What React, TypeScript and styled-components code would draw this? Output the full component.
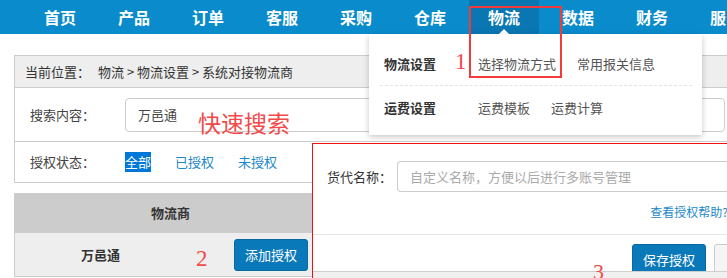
import styled, { createGlobalStyle } from 'styled-components';

const GlobalStyle = createGlobalStyle`
  html, body {
    margin: 0;
    padding: 0;
    overflow: hidden;
    background: #ffffff;
  }
  body {
    font-family: "Noto Sans CJK SC", "Microsoft YaHei", sans-serif;
    font-size: 13px;
    line-height: 20px;
    color: #333333;
  }
`;

const Page = styled.div`
  position: relative;
  width: 727px;
  height: 278px;
  overflow: hidden;
`;

const NavBar = styled.nav`
  display: flex;
  gap: 4px;
  height: 34px;
  padding-left: 25px;
  background: #0a8bcb;
  white-space: nowrap;
`;

const NavItem = styled.div<{ $active?: boolean }>`
  position: relative;
  flex: 0 0 70px;
  display: flex;
  align-items: center;
  justify-content: center;
  font-size: 16px;
  font-weight: 700;
  color: #ffffff;
  background: ${(p) => (p.$active ? '#0a77b3' : 'transparent')};

  &::after {
    content: '';
    display: ${(p) => (p.$active ? 'block' : 'none')};
    position: absolute;
    left: 50%;
    bottom: 0;
    margin-left: -5px;
    border: 5px solid transparent;
    border-bottom-color: #ffffff;
    border-top-width: 0;
  }
`;

const Main = styled.main`
  width: 900px;
  padding: 21px 0 0 14px;
`;

const Panel = styled.section`
  border: 1px solid #cccccc;
`;

const Crumb = styled.div`
  display: flex;
  align-items: center;
  gap: 8px;
  height: 31px;
  padding-left: 10px;
  background: #eeeeee;
  border-bottom: 1px solid #cccccc;
`;

const FilterRow = styled.div<{ $h: number; $line?: boolean }>`
  display: flex;
  align-items: center;
  height: ${(p) => p.$h}px;
  padding-left: 15px;
  border-bottom: ${(p) => (p.$line ? '1px solid #cccccc' : 'none')};
`;

const FilterLabel = styled.span`
  width: 95px;
  flex: 0 0 95px;
  color: #444444;
`;

const SearchInput = styled.div`
  box-sizing: border-box;
  width: 600px;
  height: 34px;
  padding-left: 12px;
  display: flex;
  align-items: center;
  border: 1px solid #cccccc;
  border-radius: 4px;
  color: #444444;
`;

const StatusLinks = styled.div`
  display: flex;
  gap: 24px;
`;

const StatusLink = styled.span<{ $selected?: boolean }>`
  color: ${(p) => (p.$selected ? '#ffffff' : '#1e88c8')};
  background: ${(p) => (p.$selected ? '#0078d7' : 'transparent')};
`;

const Table = styled.div`
  margin-top: 10px;
  border-left: 1px solid #cccccc;
  border-bottom: 1px solid #cccccc;
`;

const HeadRow = styled.div`
  display: flex;
  align-items: center;
  height: 40px;
  background: #cccccc;
`;

const HeadCell = styled.div`
  width: 311px;
  text-align: center;
  font-weight: 700;
  color: #333333;
`;

const BodyRow = styled.div`
  display: flex;
  align-items: center;
  height: 43px;
  background: #eeeeee;
`;

const NameCell = styled.div`
  width: 171px;
  text-align: center;
  font-weight: 700;
  color: #333333;
`;

const PrimaryButton = styled.button`
  box-sizing: border-box;
  height: 32px;
  padding: 0 10px;
  border: 1px solid #06699f;
  border-radius: 3px;
  background: #0a79b9;
  color: #ffffff;
  font: inherit;
  font-size: 13px;
`;

const GhostButton = styled.button`
  box-sizing: border-box;
  height: 32px;
  padding: 0 16px;
  border: 1px solid #cccccc;
  border-radius: 3px;
  background: #f5f5f5;
  color: #333333;
  font: inherit;
  font-size: 13px;
`;

const ActionCell = styled.div`
  padding-left: 48px;
`;

/* 下拉菜单 */
const Dropdown = styled.div`
  position: absolute;
  left: 369px;
  top: 34px;
  box-sizing: border-box;
  width: 333px;
  height: 101px;
  padding: 8px 10px 7px 11px;
  background: #ffffff;
  box-shadow: 0 2px 6px rgba(0, 0, 0, 0.22);
`;

const MenuRow = styled.div<{ $dashed?: boolean }>`
  display: flex;
  align-items: center;
  height: 43px;
  padding-left: 4px;
  border-bottom: ${(p) => (p.$dashed ? '1px dashed #e3e3e3' : 'none')};
`;

const MenuLabel = styled.span`
  width: 94px;
  flex: 0 0 94px;
  font-weight: 700;
  color: #333333;
`;

const MenuLinks = styled.div`
  display: flex;
  gap: 21px;
  color: #555555;
`;

/* 授权弹窗 */
const Modal = styled.div`
  position: absolute;
  left: 312px;
  top: 143px;
  box-sizing: border-box;
  width: 478px;
  height: 140px;
  display: flex;
  flex-direction: column;
  border: 1px solid #ee1111;
  border-bottom: none;
  background: #ffffff;
`;

const ModalForm = styled.div`
  display: flex;
  align-items: center;
  padding: 17px 0 0 14px;
`;

const ModalLabel = styled.span`
  width: 70px;
  flex: 0 0 70px;
  color: #333333;
`;

const ModalInput = styled.div`
  box-sizing: border-box;
  flex: 1;
  height: 31px;
  padding-left: 12px;
  display: flex;
  align-items: center;
  border: 1px solid #cccccc;
  border-right: none;
  border-radius: 4px 0 0 4px;
  color: #aaaaaa;
`;

const HelpRow = styled.div`
  display: flex;
  justify-content: flex-end;
  height: 43px;
  padding: 10px 61px 0 0;
  box-sizing: border-box;
  border-bottom: 1px solid #e5e5e5;
`;

const HelpLink = styled.span`
  font-size: 12px;
  color: #1e88c8;
  white-space: nowrap;
`;

const ModalFooter = styled.div`
  display: flex;
  justify-content: flex-end;
  gap: 8px;
  height: 36px;
  padding: 9px 15px 0 0;
  box-sizing: border-box;
  overflow: hidden;
`;

const ScrollStrip = styled.div`
  height: 10px;
  border-top: 1px solid #cfcfcf;
  background: #f0f0f0;
`;

/* 标注 */
const Mark = styled.span<{ $x: number; $y: number; $size: number; $serif?: boolean }>`
  position: absolute;
  left: ${(p) => p.$x}px;
  top: ${(p) => p.$y}px;
  font-family: ${(p) =>
    p.$serif ? '"Liberation Serif", serif' : '"Noto Sans CJK SC", sans-serif'};
  font-size: ${(p) => p.$size}px;
  line-height: 1;
  color: #f24a4a;
  white-space: nowrap;
`;

const MarkBox = styled.div`
  position: absolute;
  left: 469px;
  top: 6px;
  width: 89px;
  height: 68px;
  border: 2px solid #f23a3a;
`;

const navItems = ['首页', '产品', '订单', '客服', '采购', '仓库', '物流', '数据', '财务', '服务'];

export default function App() {
  return (
    <Page>
      <GlobalStyle />
      <NavBar>
        {navItems.map((n) => (
          <NavItem key={n} $active={n === '物流'}>
            {n}
          </NavItem>
        ))}
      </NavBar>

      <Main>
        <Panel>
          <Crumb>
            <span>当前位置：</span>
            <span>物流 &gt; 物流设置 &gt; 系统对接物流商</span>
          </Crumb>
          <FilterRow $h={53} $line>
            <FilterLabel>搜索内容：</FilterLabel>
            <SearchInput>万邑通</SearchInput>
          </FilterRow>
          <FilterRow $h={40}>
            <FilterLabel>授权状态：</FilterLabel>
            <StatusLinks>
              <StatusLink $selected>全部</StatusLink>
              <StatusLink>已授权</StatusLink>
              <StatusLink>未授权</StatusLink>
            </StatusLinks>
          </FilterRow>
        </Panel>

        <Table>
          <HeadRow>
            <HeadCell>物流商</HeadCell>
          </HeadRow>
          <BodyRow>
            <NameCell>万邑通</NameCell>
            <ActionCell>
              <PrimaryButton>添加授权</PrimaryButton>
            </ActionCell>
          </BodyRow>
        </Table>
      </Main>

      <Dropdown>
        <MenuRow $dashed>
          <MenuLabel>物流设置</MenuLabel>
          <MenuLinks>
            <span>选择物流方式</span>
            <span>常用报关信息</span>
          </MenuLinks>
        </MenuRow>
        <MenuRow>
          <MenuLabel>运费设置</MenuLabel>
          <MenuLinks>
            <span>运费模板</span>
            <span>运费计算</span>
          </MenuLinks>
        </MenuRow>
      </Dropdown>

      <Modal>
        <ModalForm>
          <ModalLabel>货代名称：</ModalLabel>
          <ModalInput>自定义名称，方便以后进行多账号管理</ModalInput>
        </ModalForm>
        <HelpRow>
          <HelpLink>查看授权帮助?</HelpLink>
        </HelpRow>
        <ModalFooter>
          <PrimaryButton>保存授权</PrimaryButton>
          <GhostButton>取消</GhostButton>
        </ModalFooter>
        <ScrollStrip />
      </Modal>

      <MarkBox />
      <Mark $x={455} $y={50} $size={23} $serif>1</Mark>
      <Mark $x={196} $y={247} $size={23} $serif>2</Mark>
      <Mark $x={593} $y={261} $size={22} $serif>3</Mark>
      <Mark $x={198} $y={111} $size={23}>快速搜索</Mark>
    </Page>
  );
}
